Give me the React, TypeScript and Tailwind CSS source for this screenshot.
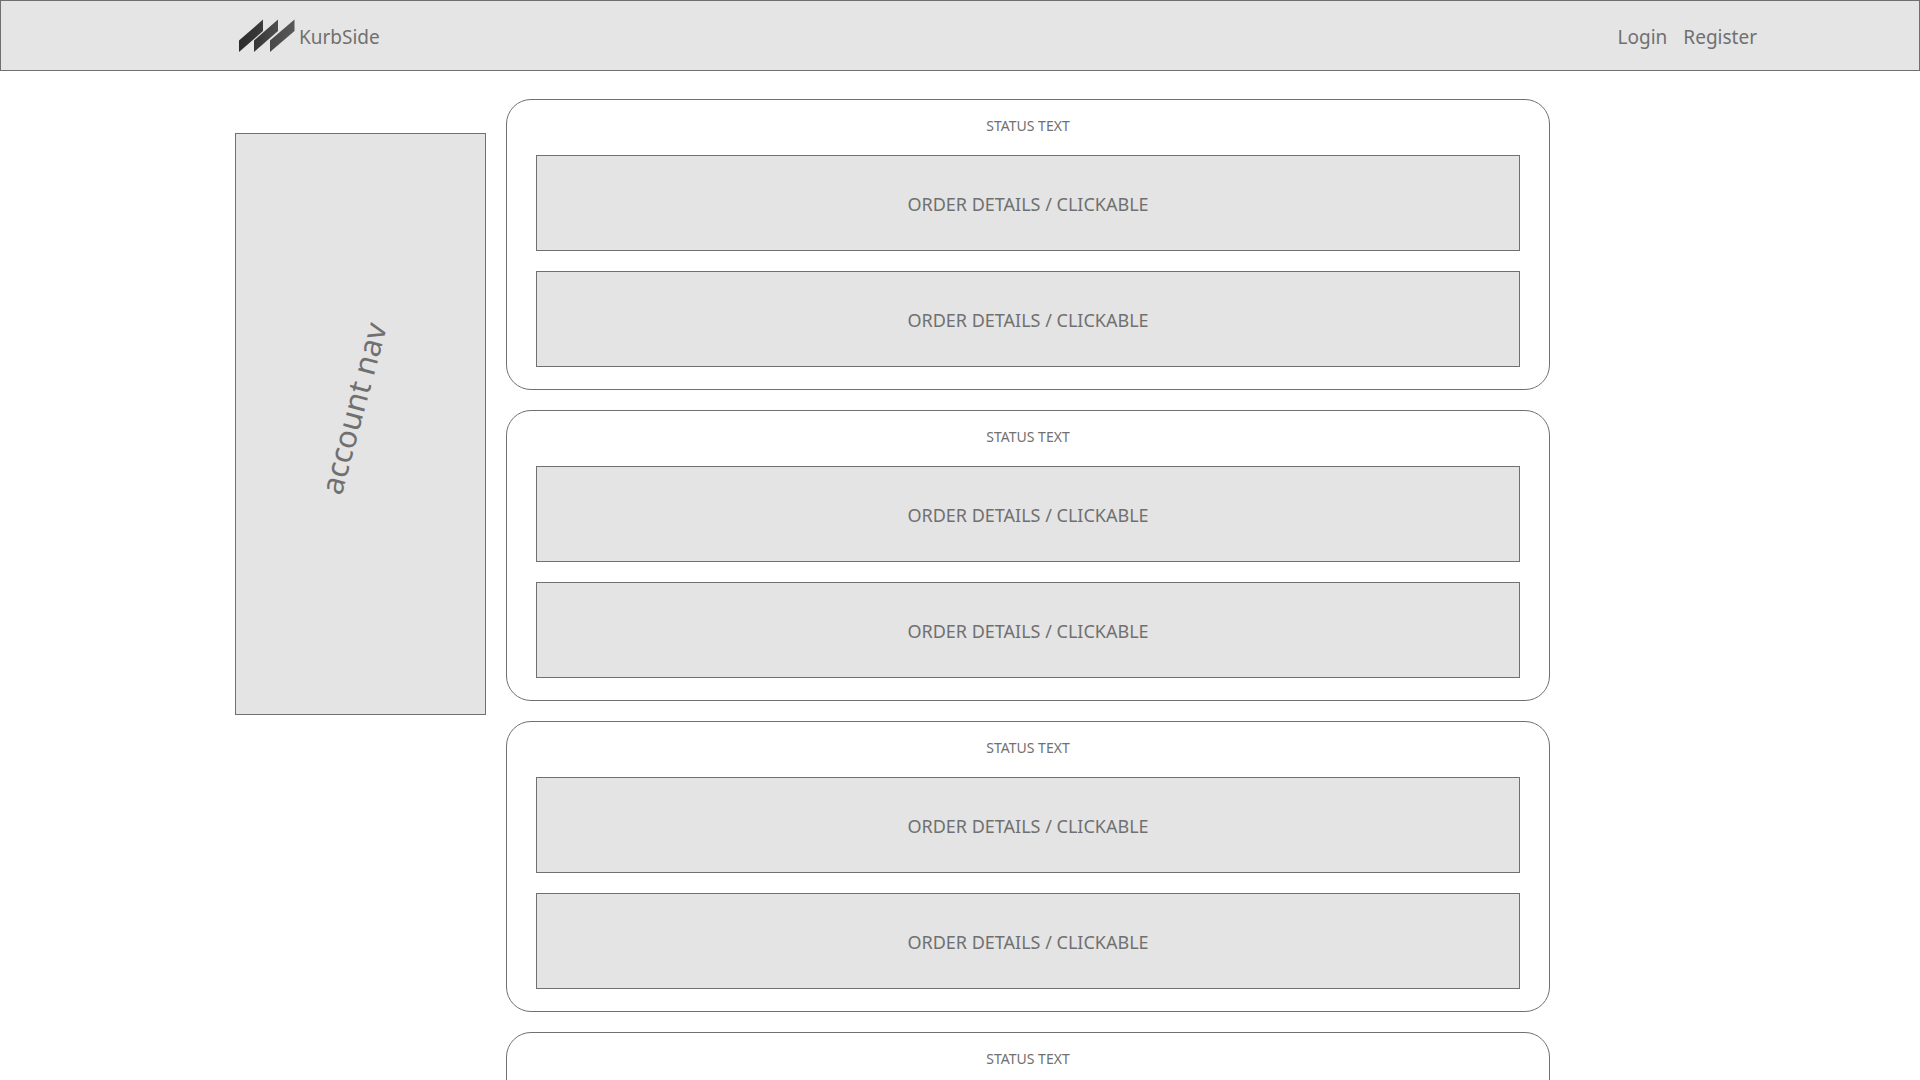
const groups = [
  { id: 1, orders: [1, 2] },
  { id: 2, orders: [3, 4] },
  { id: 3, orders: [5, 6] },
  { id: 4, orders: [] },
];

function Logo() {
  return (
    <svg width="56" height="34" viewBox="0 0 56 34" aria-hidden="true">
      <defs>
        <linearGradient id="mark" x1="0" x2="56" y1="0" y2="0" gradientUnits="userSpaceOnUse">
          <stop offset="0" stopColor="#2b2b2b" />
          <stop offset="0.35" stopColor="#383838" />
          <stop offset="0.6" stopColor="#4a4a4a" />
          <stop offset="1" stopColor="#595959" />
        </linearGradient>
      </defs>
      <g fill="url(#mark)">
        <path d="M0 21.5 24 0.5V12L0 33Z" />
        <path d="M15 21.5 39 0.5V12L15 33Z" />
        <path d="M31 21.5 55.5 0.5V12L31 33Z" />
      </g>
    </svg>
  );
}

function OrderGroup({ orders }: { orders: number[] }) {
  return (
    <section className="flex min-h-[291px] flex-col rounded-[25px] border border-[#707070] bg-white px-[29px] pb-[22px]">
      <h2 className="flex h-[55px] items-center justify-center pb-1 text-sm">STATUS TEXT</h2>
      <div className="flex flex-col gap-5">
        {orders.map((id) => (
          <button
            key={id}
            type="button"
            className="h-24 w-full border border-[#707070] bg-[#e4e4e4] pt-0.5 text-lg"
          >
            ORDER DETAILS / CLICKABLE
          </button>
        ))}
      </div>
    </section>
  );
}

export default function App() {
  return (
    <div className="min-h-screen bg-white font-['Noto_Sans',sans-serif] text-[#707070]">
      <header className="flex h-[71px] items-center justify-between border border-[#707070] bg-[#e5e5e5] pr-[162px] pl-[238px]">
        <a href="#home" className="flex items-center gap-1">
          <Logo />
          <span className="pt-1 text-[19px]">KurbSide</span>
        </a>
        <nav className="flex gap-4 pt-1 text-[19px]">
          <a href="#login">Login</a>
          <a href="#register">Register</a>
        </nav>
      </header>
      <main className="flex items-start gap-5 pt-7 pr-[370px] pb-7 pl-[235px]">
        <aside className="mt-[34px] flex h-[582px] w-[251px] shrink-0 items-center justify-center border border-[#707070] bg-[#e4e4e4] pr-4 pb-8">
          <span className="-rotate-75 text-[31px] whitespace-nowrap">account nav</span>
        </aside>
        <div className="flex min-w-0 flex-1 flex-col gap-5">
          {groups.map((group) => (
            <OrderGroup key={group.id} orders={group.orders} />
          ))}
        </div>
      </main>
    </div>
  );
}
